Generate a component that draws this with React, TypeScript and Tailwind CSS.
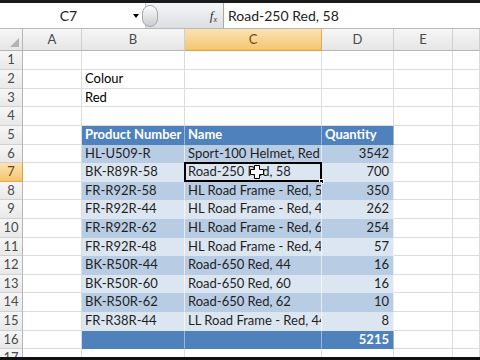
const font = { fontFamily: "Lato, 'Open Sans', 'Liberation Sans', sans-serif" };

type Kind = "plain" | "head" | "dark" | "light" | "total";
type Row = { n: number; tall: boolean; kind: Kind; b?: string; c?: string; d?: string };

const rows: Row[] = [
  { n: 1, tall: true, kind: "plain" },
  { n: 2, tall: true, kind: "plain", b: "Colour" },
  { n: 3, tall: false, kind: "plain", b: "Red" },
  { n: 4, tall: true, kind: "plain" },
  { n: 5, tall: true, kind: "head", b: "Product Number", c: "Name", d: "Quantity" },
  { n: 6, tall: false, kind: "dark", b: "HL-U509-R", c: "Sport-100 Helmet, Red", d: "3542" },
  { n: 7, tall: true, kind: "light", b: "BK-R89R-58", c: "Road-250 Red, 58", d: "700" },
  { n: 8, tall: false, kind: "dark", b: "FR-R92R-58", c: "HL Road Frame - Red, 58", d: "350" },
  { n: 9, tall: true, kind: "light", b: "FR-R92R-44", c: "HL Road Frame - Red, 44", d: "262" },
  { n: 10, tall: true, kind: "dark", b: "FR-R92R-62", c: "HL Road Frame - Red, 62", d: "254" },
  { n: 11, tall: false, kind: "light", b: "FR-R92R-48", c: "HL Road Frame - Red, 48", d: "57" },
  { n: 12, tall: true, kind: "dark", b: "BK-R50R-44", c: "Road-650 Red, 44", d: "16" },
  { n: 13, tall: false, kind: "light", b: "BK-R50R-60", c: "Road-650 Red, 60", d: "16" },
  { n: 14, tall: true, kind: "dark", b: "BK-R50R-62", c: "Road-650 Red, 62", d: "10" },
  { n: 15, tall: true, kind: "light", b: "FR-R38R-44", c: "LL Road Frame - Red, 44", d: "8" },
  { n: 16, tall: false, kind: "total", d: "5215" },
  { n: 17, tall: true, kind: "plain" },
];

const tableCell: Record<Kind, string> = {
  plain: "bg-white border-r border-b border-[#dadcdd]",
  head: "bg-[#4f81bd] text-white font-bold border-r border-r-[#9bb7da] border-b border-b-[#4f81bd]",
  dark: "bg-[#b8cce4] text-[#1f1f1f] border-r border-r-[#e4ecf6] border-b border-b-[#b8cce4]",
  light: "bg-[#dce6f1] text-[#1f1f1f] border-r border-r-[#f2f6fb] border-b border-b-[#dce6f1]",
  total: "bg-[#4f81bd] text-white font-bold border-r border-r-[#9bb7da] border-b border-b-[#4f81bd]",
};

const plain = "bg-white border-r border-b border-[#dadcdd]";

function CursorPlus() {
  return (
    <svg width="16" height="16" viewBox="0 0 16 16" className="absolute left-[64px] top-[1px]">
      <path d="M5.5 1.5h5v4h4v5h-4v4h-5v-4h-4v-5h4z" fill="white" stroke="black" strokeWidth="1" />
    </svg>
  );
}

function ColHead({ label, active }: { label: string; active?: boolean }) {
  return (
    <div
      className={
        active
          ? "flex items-center justify-center bg-gradient-to-b from-[#fbe3b4] to-[#f4c46e] border-r border-r-[#e3a94a] border-b border-b-[#d9a243] text-[#6b4a12]"
          : "flex items-center justify-center bg-gradient-to-b from-[#f6f6f6] to-[#e6e6e6] border-r border-r-[#cfcfcf] border-b border-b-[#b5b5b5] text-[#4a4a4a]"
      }
    >
      {label}
    </div>
  );
}

export default function App() {
  return (
    <div className="w-[480px] h-[360px] overflow-hidden bg-black flex flex-col text-[13px]" style={font}>
      <div className="h-[3px] bg-[#1a1a1a] shrink-0" />
      {/* formula bar */}
      <div className="h-[26px] shrink-0 flex bg-[#e9ebee] border-b border-[#b8b8b8] text-[14px]">
        <div className="w-[146px] bg-white flex items-center border-r border-[#c8c8c8]">
          <span className="flex-1 text-center pl-[4px] text-[#222]">C7</span>
          <span className="w-0 h-0 border-l-[3px] border-r-[3px] border-t-[4px] border-l-transparent border-r-transparent border-t-black mr-[6px]" />
        </div>
        <div className="w-[78px] flex items-center bg-gradient-to-b from-[#f4f5f6] to-[#dcdfe3] border-r border-[#a9a9a9]">
          <div className="w-[16px] h-[22px] -ml-[4px] rounded-full bg-gradient-to-b from-[#fdfdfd] to-[#c9ccd0] border border-[#a5a8ad]" />
          <span className="ml-auto mr-[6px] italic text-[13px] text-[#333]" style={{ fontFamily: "'Liberation Serif', serif" }}>
            f<sub className="text-[8px]">x</sub>
          </span>
        </div>
        <div className="flex-1 bg-white flex items-center pl-[4px] text-[#222]">Road-250 Red, 58</div>
      </div>
      {/* grid */}
      <div className="flex-1 bg-white grid grid-cols-[23px_59px_103px_137px_72px_59px_1fr] content-start overflow-hidden">
        <div className="h-[22px] relative bg-gradient-to-b from-[#f6f6f6] to-[#e6e6e6] border-r border-b border-[#b5b5b5]">
          <div
            className="absolute right-[3px] bottom-[3px] w-0 h-0"
            style={{ borderBottom: "9px solid #b3b3b3", borderLeft: "9px solid transparent" }}
          />
        </div>
        <ColHead label="A" />
        <ColHead label="B" />
        <ColHead label="C" active />
        <ColHead label="D" />
        <ColHead label="E" />
        <ColHead label="" />
        {rows.map((r) => {
          const h = r.tall ? "h-[19px]" : "h-[18px]";
          const cls = r.kind !== "plain" ? tableCell[r.kind] : plain;
          const sel = r.n === 7;
          return [
            <div
              key={`h${r.n}`}
              className={
                sel
                  ? `${h} flex items-center justify-center bg-gradient-to-b from-[#fbe3b4] to-[#f4c46e] border-r border-r-[#d9a243] border-b border-b-[#e3a94a] text-[#6b4a12]`
                  : `${h} flex items-center justify-center bg-gradient-to-b from-[#f6f6f6] to-[#e9e9e9] border-r border-r-[#b5b5b5] border-b border-b-[#d0d0d0] text-[#4a4a4a]`
              }
            >
              {r.n}
            </div>,
            <div key={`a${r.n}`} className={`${h} ${plain}`} />,
            <div key={`b${r.n}`} className={`${h} ${cls} pl-[3px] flex items-center overflow-hidden whitespace-nowrap`}>
              {r.b}
            </div>,
            <div key={`c${r.n}`} className={`${h} ${cls} relative`}>
              <div className="h-full pl-[3px] flex items-center overflow-hidden whitespace-nowrap">{r.c}</div>
              {sel && (
                <>
                  <div className="absolute -left-[1px] -top-[1px] -right-[1px] -bottom-[1px] border-2 border-black" />
                  <div className="absolute -right-[3px] -bottom-[3px] w-[5px] h-[5px] bg-black border border-white" />
                  <CursorPlus />
                </>
              )}
            </div>,
            <div
              key={`d${r.n}`}
              className={`${h} ${cls} pr-[4px] flex items-center whitespace-nowrap ${r.kind === "head" ? "justify-start pl-[3px]" : "justify-end"}`}
            >
              {r.d}
            </div>,
            <div key={`e${r.n}`} className={`${h} ${plain}`} />,
            <div key={`f${r.n}`} className={`${h} ${plain}`} />,
          ];
        })}
      </div>
      <div className="h-[3px] bg-[#111] shrink-0" />
    </div>
  );
}
